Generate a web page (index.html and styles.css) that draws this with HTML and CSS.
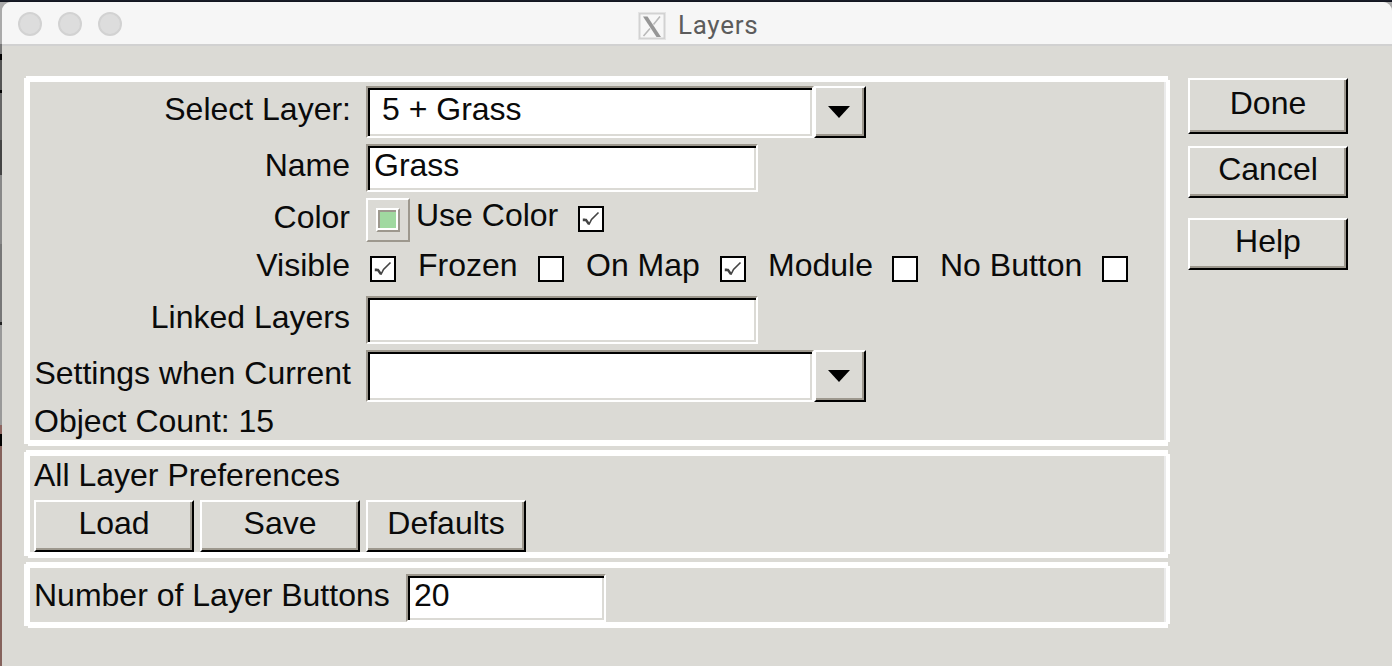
FILE: index.html
```html
<!DOCTYPE html>
<html lang="en">
<head>
<meta charset="utf-8">
<title>Layers</title>
<link rel="stylesheet" href="styles.css">
</head>
<body>
<div class="window">
  <header class="titlebar">
    <div class="lights"><i class="light"></i><i class="light"></i><i class="light"></i></div>
    <div class="title">
      <svg class="x-icon" viewBox="0 0 28 28" width="28" height="28">
        <rect x="0" y="0" width="28" height="28" fill="#e4e4e4"/>
        <rect x="1" y="1" width="26" height="26" fill="#d2d2d2"/>
        <rect x="2.500" y="2.500" width="23" height="23" fill="#f7f7f7"/>
        <path d="M22 4.500L15.500 12.500M12 16.500L5.500 24" stroke="#b9b9b9" stroke-width="1.6" fill="none"/>
        <path d="M5 4.500H9.500L23 25H18.500Z" fill="#969696"/>
      </svg>
      <span>Layers</span>
    </div>
  </header>
  <main class="content">
    <div class="groups">
      <section class="group layer">
        <div class="row combo-row">
          <label class="label">Select Layer:</label>
          <div class="field wide"><span class="value inset">5 + Grass</span></div>
          <button class="button drop"><svg width="22" height="12" viewBox="0 0 22 12"><path d="M0 0H22L11 12Z"/></svg></button>
        </div>
        <div class="row name-row">
          <label class="label">Name</label>
          <div class="field"><span class="value">Grass</span></div>
        </div>
        <div class="row color-row">
          <label class="label">Color</label>
          <button class="swatch"><i class="chip"></i></button>
          <span class="use-color">Use Color</span>
          <i class="check"><svg viewBox="0 0 22 22"><path class="hook" d="M4 10.500V12H6L8.500 15.500H10"/><path d="M9.500 15.500L11.500 11.500L18.500 4.500"/></svg></i>
        </div>
        <div class="row visible-row">
          <label class="label">Visible</label>
          <i class="check"><svg viewBox="0 0 22 22"><path class="hook" d="M4 10.500V12H6L8.500 15.500H10"/><path d="M9.500 15.500L11.500 11.500L18.500 4.500"/></svg></i>
          <span class="option frozen">Frozen</span><i class="check"></i>
          <span class="option onmap">On Map</span><i class="check"><svg viewBox="0 0 22 22"><path class="hook" d="M4 10.500V12H6L8.500 15.500H10"/><path d="M9.500 15.500L11.500 11.500L18.500 4.500"/></svg></i>
          <span class="option module">Module</span><i class="check"></i>
          <span class="option nobutton">No Button</span><i class="check"></i>
        </div>
        <div class="row linked-row">
          <label class="label">Linked Layers</label>
          <div class="field"></div>
        </div>
        <div class="row combo-row">
          <label class="label">Settings when Current</label>
          <div class="field wide"></div>
          <button class="button drop"><svg width="22" height="12" viewBox="0 0 22 12"><path d="M0 0H22L11 12Z"/></svg></button>
        </div>
        <div class="line">Object Count: 15</div>
      </section>
      <section class="group prefs">
        <div class="line">All Layer Preferences</div>
        <div class="buttons">
          <button class="button">Load</button>
          <button class="button">Save</button>
          <button class="button">Defaults</button>
        </div>
      </section>
      <section class="group count">
        <label class="count-label">Number of Layer Buttons</label>
        <div class="field short"><span class="value">20</span></div>
      </section>
    </div>
    <aside class="actions">
      <button class="button done">Done</button>
      <button class="button">Cancel</button>
      <button class="button help">Help</button>
    </aside>
  </main>
</div>
</body>
</html>
```
FILE: styles.css
```css
* { box-sizing: border-box; }
body {
  margin: 0;
  width: 1392px;
  height: 666px;
  overflow: hidden;
  padding: 2px 0 0 2px;
  background:
    linear-gradient(#1c202b, #10131d) 0 0 / 100% 2px no-repeat,
    linear-gradient(#aaa 0 44px, #777 44px 54px, #000 54px 60px, #555 60px 90px, #000 90px 93px, #666 93px 140px, #444 140px 175px, #888 175px 244px, #777 244px 322px, #222 322px 325px, #999 325px 425px, #8d6560 425px 434px, #000 434px 446px, #85625c 446px);
  font: 32px/36px "Liberation Sans", Arial, sans-serif;
  color: #0a0a0a;
}
.window {
  height: 664px;
  border-radius: 9px 9px 0 0;
  overflow: hidden;
  background: #dbdad5;
}
.titlebar {
  display: flex;
  height: 44px;
  background: #f6f6f6;
  border-bottom: 2px solid #d1d1d1;
}
.lights { display: flex; gap: 16px; padding: 10px 0 0 16px; width: 636px; }
.light {
  width: 24px;
  height: 24px;
  border-radius: 50%;
  background: #dddddd;
  border: 2px solid #d2d2d2;
}
.title {
  display: flex;
  gap: 12px;
  padding-top: 10px;
  font: 26px/27px Roboto, sans-serif;
  letter-spacing: 0.7px;
  color: #5c5c5c;
}
.content { display: flex; gap: 18px; padding: 30px 0 0 22px; }
.groups { display: flex; flex-direction: column; gap: 4px; width: 1146px; }
.group {
  border: 6px solid #fff;
  border-right-width: 4px;
  box-shadow: inset -2px 0 #ebebeb;
  padding: 4px 0 0 4px;
  clip-path: polygon(0 2px, 2px 2px, 2px 0, 1144px 0, 1144px 4px, 100% 4px, 100% calc(100% - 4px), 1144px calc(100% - 4px), 1144px 100%, 4px 100%, 4px calc(100% - 2px), 0 calc(100% - 2px));
}
.layer { height: 370px; }
.prefs { height: 108px; padding-top: 1px; }
.count { height: 66px; padding-top: 6px; display: flex; }
.row { display: flex; align-items: flex-start; height: 52px; }
.label { width: 316px; margin-right: 16px; text-align: right; white-space: nowrap; }
.combo-row .label { width: 317px; margin: 5px 15px 0 0; }
.name-row { margin-top: 6px; height: 54px; }
.name-row .label, .linked-row .label { margin-top: 3px; }
.color-row { height: 48px; }
.color-row .label { margin-top: 1px; }
.visible-row { height: 50px; padding-top: 1px; }
.visible-row .label { margin-right: 20px; }
.linked-row { height: 54px; }
.field {
  width: 392px;
  height: 48px;
  background: #fff;
  border: 2px solid #fff;
  border-top-color: #9d988e;
  border-left-color: #9d988e;
  box-shadow: inset 2px 2px #000, inset -2px -2px #dbdad5;
}
.wide { width: 448px; height: 52px; }
.short { width: 200px; }
.value { display: block; padding: 1px 0 0 6px; }
.inset { padding: 3px 0 0 14px; }
.button {
  width: 160px;
  height: 52px;
  padding: 3px 0 0;
  display: flex;
  justify-content: center;
  align-items: flex-start;
  font: inherit;
  color: inherit;
  background: #dbdad5;
  border: 2px solid #000;
  border-top-color: #fff;
  border-left-color: #fff;
  border-radius: 0;
  box-shadow: inset -2px -2px #9d988e;
}
.drop { width: 52px; padding-top: 18px; }
.drop svg { display: block; margin-left: -2px; }
.swatch {
  width: 44px;
  height: 44px;
  padding: 8px;
  background: #dbdad5;
  border: 2px solid #9d988e;
  border-top-color: #fff;
  border-left-color: #fff;
}
.chip {
  display: block;
  width: 24px;
  height: 24px;
  background: #a0d9a0;
  border: 2px solid #9d988e;
  border-top-color: #fff;
  border-left-color: #fff;
  box-shadow: inset -2px -2px #fff, inset 2px 2px #9d988e;
}
.use-color { width: 162px; margin: -1px 0 0 6px; white-space: nowrap; }
.check { width: 26px; height: 26px; background: #fff; border: 2px solid #000; }
.check svg { display: block; width: 22px; height: 22px; fill: none; stroke: #444; stroke-width: 1.6; }
.check .hook { stroke-width: 2.4; }
.color-row .check { margin-top: 8px; }
.visible-row .check { margin-top: 9px; }
.option { white-space: nowrap; }
.frozen { width: 142px; padding-left: 22px; }
.onmap { width: 156px; padding-left: 22px; }
.module { width: 146px; padding-left: 22px; }
.nobutton { width: 184px; padding-left: 22px; }
.line { margin-top: 1px; }
.prefs .line { margin: 0; }
.buttons { display: flex; gap: 6px; margin-top: 7px; }
.count-label { width: 372px; margin-top: 3px; white-space: nowrap; }
.actions { display: flex; flex-direction: column; padding-top: 2px; }
.done { height: 56px; padding-top: 5px; margin-bottom: 12px; }
.help { margin-top: 20px; }
```
